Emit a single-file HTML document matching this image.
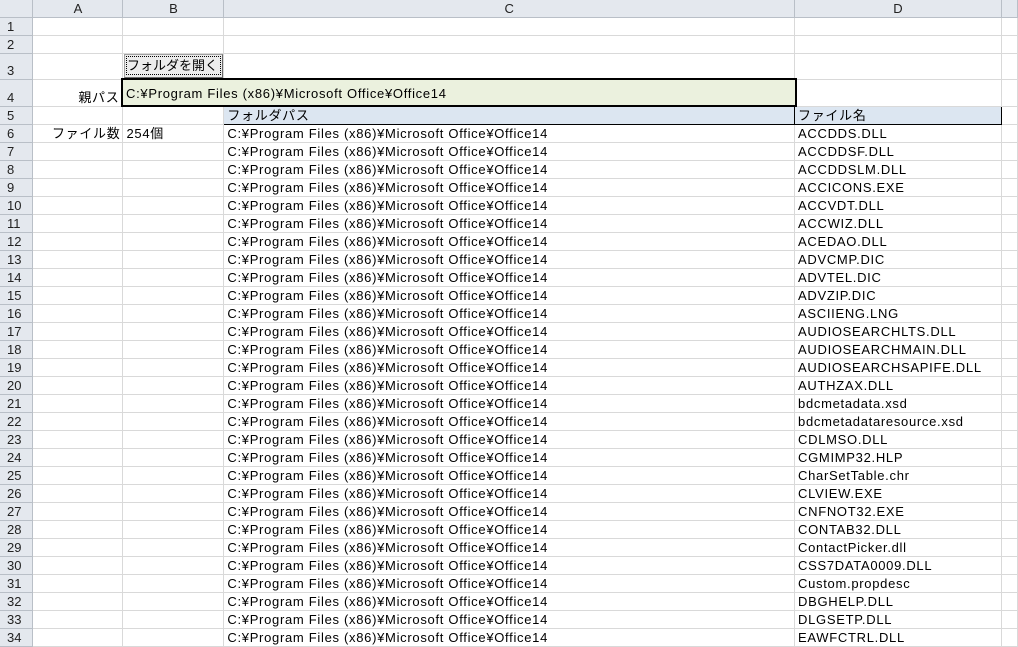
<!DOCTYPE html>
<html><head><meta charset="utf-8"><style>
body{margin:0;width:1018px;height:647px;overflow:hidden;background:#fff;font-family:"Liberation Sans","Noto Sans CJK JP",sans-serif;font-size:13px;color:#000;letter-spacing:0.7px}
table{border-collapse:collapse;table-layout:fixed;position:absolute;left:0;top:0}
td{border-right:1px solid #d9d9d9;border-bottom:1px solid #d9d9d9;padding:0 0 0 3px;height:17px;white-space:nowrap;overflow:hidden;line-height:17px;vertical-align:bottom}
td.h{background:#e4e8ee;border-right:1px solid #b9bfc7;border-bottom:1px solid #b9bfc7;text-align:center;padding:0;color:#222;font-size:13px;letter-spacing:0}
td.r{text-align:left;padding-left:7px}
tr.hd td{height:16px;text-align:center}
.btn{position:absolute;left:124px;top:54px;width:99px;height:24px;background:#ececec;border:1px solid #a0a0a0;border-right-color:#6a6a6a;border-bottom-color:#6a6a6a;box-sizing:border-box;font-size:13px;line-height:20px;text-align:left;white-space:nowrap;letter-spacing:0;overflow:visible}
.btn span{display:inline-block;border:1px dotted #000;margin:1px 0 0 1px;padding:0;line-height:17px;width:93px}
.inp{position:absolute;left:121px;top:78px;width:676px;height:29px;box-sizing:border-box;border:2px solid #000;background:#ebf1de;line-height:27px;padding-left:3px;white-space:nowrap}
.hdr{background:#dce6f1;border:1px solid #000!important}
</style></head><body>
<table>
<colgroup><col style="width:33px"><col style="width:90px"><col style="width:101px"><col style="width:571px"><col style="width:207px"><col style="width:16px"></colgroup>
<tr class="hd"><td class="h"></td><td class="h">A</td><td class="h">B</td><td class="h">C</td><td class="h">D</td><td class="h"></td></tr>
<tr><td class="h r">1</td><td></td><td></td><td></td><td></td><td></td></tr>
<tr><td class="h r">2</td><td></td><td></td><td></td><td></td><td></td></tr>
<tr><td class="h r" style="height:25px">3</td><td></td><td></td><td></td><td></td><td></td></tr>
<tr><td class="h r" style="height:26px">4</td><td style="text-align:right;padding-right:3px">親パス</td><td></td><td></td><td></td><td></td></tr>
<tr><td class="h r">5</td><td></td><td></td><td class="hdr">フォルダパス</td><td class="hdr">ファイル名</td><td></td></tr>
<tr><td class="h r">6</td><td style="text-align:right;padding-right:2px">ファイル数</td><td>254個</td><td>C:¥Program Files (x86)¥Microsoft Office¥Office14</td><td>ACCDDS.DLL</td><td></td></tr>
<tr><td class="h r">7</td><td></td><td></td><td>C:¥Program Files (x86)¥Microsoft Office¥Office14</td><td>ACCDDSF.DLL</td><td></td></tr>
<tr><td class="h r">8</td><td></td><td></td><td>C:¥Program Files (x86)¥Microsoft Office¥Office14</td><td>ACCDDSLM.DLL</td><td></td></tr>
<tr><td class="h r">9</td><td></td><td></td><td>C:¥Program Files (x86)¥Microsoft Office¥Office14</td><td>ACCICONS.EXE</td><td></td></tr>
<tr><td class="h r">10</td><td></td><td></td><td>C:¥Program Files (x86)¥Microsoft Office¥Office14</td><td>ACCVDT.DLL</td><td></td></tr>
<tr><td class="h r">11</td><td></td><td></td><td>C:¥Program Files (x86)¥Microsoft Office¥Office14</td><td>ACCWIZ.DLL</td><td></td></tr>
<tr><td class="h r">12</td><td></td><td></td><td>C:¥Program Files (x86)¥Microsoft Office¥Office14</td><td>ACEDAO.DLL</td><td></td></tr>
<tr><td class="h r">13</td><td></td><td></td><td>C:¥Program Files (x86)¥Microsoft Office¥Office14</td><td>ADVCMP.DIC</td><td></td></tr>
<tr><td class="h r">14</td><td></td><td></td><td>C:¥Program Files (x86)¥Microsoft Office¥Office14</td><td>ADVTEL.DIC</td><td></td></tr>
<tr><td class="h r">15</td><td></td><td></td><td>C:¥Program Files (x86)¥Microsoft Office¥Office14</td><td>ADVZIP.DIC</td><td></td></tr>
<tr><td class="h r">16</td><td></td><td></td><td>C:¥Program Files (x86)¥Microsoft Office¥Office14</td><td>ASCIIENG.LNG</td><td></td></tr>
<tr><td class="h r">17</td><td></td><td></td><td>C:¥Program Files (x86)¥Microsoft Office¥Office14</td><td>AUDIOSEARCHLTS.DLL</td><td></td></tr>
<tr><td class="h r">18</td><td></td><td></td><td>C:¥Program Files (x86)¥Microsoft Office¥Office14</td><td>AUDIOSEARCHMAIN.DLL</td><td></td></tr>
<tr><td class="h r">19</td><td></td><td></td><td>C:¥Program Files (x86)¥Microsoft Office¥Office14</td><td>AUDIOSEARCHSAPIFE.DLL</td><td></td></tr>
<tr><td class="h r">20</td><td></td><td></td><td>C:¥Program Files (x86)¥Microsoft Office¥Office14</td><td>AUTHZAX.DLL</td><td></td></tr>
<tr><td class="h r">21</td><td></td><td></td><td>C:¥Program Files (x86)¥Microsoft Office¥Office14</td><td>bdcmetadata.xsd</td><td></td></tr>
<tr><td class="h r">22</td><td></td><td></td><td>C:¥Program Files (x86)¥Microsoft Office¥Office14</td><td>bdcmetadataresource.xsd</td><td></td></tr>
<tr><td class="h r">23</td><td></td><td></td><td>C:¥Program Files (x86)¥Microsoft Office¥Office14</td><td>CDLMSO.DLL</td><td></td></tr>
<tr><td class="h r">24</td><td></td><td></td><td>C:¥Program Files (x86)¥Microsoft Office¥Office14</td><td>CGMIMP32.HLP</td><td></td></tr>
<tr><td class="h r">25</td><td></td><td></td><td>C:¥Program Files (x86)¥Microsoft Office¥Office14</td><td>CharSetTable.chr</td><td></td></tr>
<tr><td class="h r">26</td><td></td><td></td><td>C:¥Program Files (x86)¥Microsoft Office¥Office14</td><td>CLVIEW.EXE</td><td></td></tr>
<tr><td class="h r">27</td><td></td><td></td><td>C:¥Program Files (x86)¥Microsoft Office¥Office14</td><td>CNFNOT32.EXE</td><td></td></tr>
<tr><td class="h r">28</td><td></td><td></td><td>C:¥Program Files (x86)¥Microsoft Office¥Office14</td><td>CONTAB32.DLL</td><td></td></tr>
<tr><td class="h r">29</td><td></td><td></td><td>C:¥Program Files (x86)¥Microsoft Office¥Office14</td><td>ContactPicker.dll</td><td></td></tr>
<tr><td class="h r">30</td><td></td><td></td><td>C:¥Program Files (x86)¥Microsoft Office¥Office14</td><td>CSS7DATA0009.DLL</td><td></td></tr>
<tr><td class="h r">31</td><td></td><td></td><td>C:¥Program Files (x86)¥Microsoft Office¥Office14</td><td>Custom.propdesc</td><td></td></tr>
<tr><td class="h r">32</td><td></td><td></td><td>C:¥Program Files (x86)¥Microsoft Office¥Office14</td><td>DBGHELP.DLL</td><td></td></tr>
<tr><td class="h r">33</td><td></td><td></td><td>C:¥Program Files (x86)¥Microsoft Office¥Office14</td><td>DLGSETP.DLL</td><td></td></tr>
<tr><td class="h r">34</td><td></td><td></td><td>C:¥Program Files (x86)¥Microsoft Office¥Office14</td><td>EAWFCTRL.DLL</td><td></td></tr>
</table>
<div class="btn"><span>フォルダを開く</span></div>
<div class="inp">C:¥Program Files (x86)¥Microsoft Office¥Office14</div>
</body></html>
